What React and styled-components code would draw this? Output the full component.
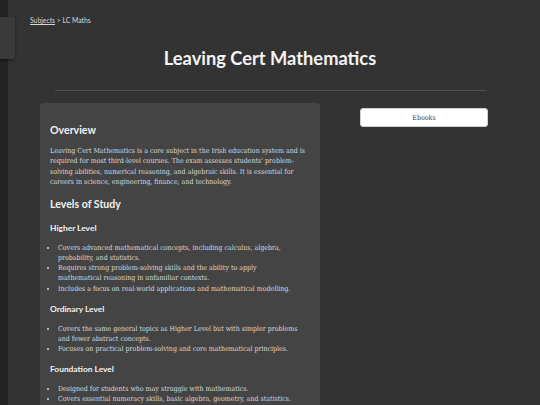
import React from 'react';
import styled, { createGlobalStyle } from 'styled-components';

const GlobalStyle = createGlobalStyle`
	html, body {
		margin: 0;
		padding: 0;
		background: #333333;
	}
	body {
		font-family: 'DejaVu Serif', serif;
		color: #e6e6e6;
		overflow: hidden;
	}
`;

const Page = styled.div`
	position: relative;
	width: 540px;
	height: 405px;
	background: #333333;
	overflow: hidden;
`;

const SideStrip = styled.div`
	position: absolute;
	left: 0;
	top: 0;
	width: 8px;
	height: 100%;
	background: #232323;
`;

const SideTab = styled.div`
	position: absolute;
	left: 0;
	top: 17px;
	width: 15px;
	height: 42px;
	background: #3a3a3a;
	border-radius: 0 2px 2px 0;
	box-shadow: 0 1px 3px rgba(0, 0, 0, 0.5);
`;

const Main = styled.main`
	padding: 16px 0 0 0;
`;

const Breadcrumb = styled.nav`
	margin-left: 30px;
	font-family: 'Lato', sans-serif;
	font-size: 6.8px;
	line-height: 8px;
	color: #d8d8d8;

	a {
		color: #d8d8d8;
		text-decoration: underline;
	}
`;

const Title = styled.h1`
	margin: 22px 0 0 0;
	text-align: center;
	font-family: 'Lato', sans-serif;
	font-weight: 700;
	font-size: 18.3px;
	line-height: 24px;
	color: #f4f4f4;
`;

const Divider = styled.hr`
	margin: 20px 0 0 55px;
	width: 431px;
	border: none;
	border-top: 1px solid #505050;
`;

const Content = styled.div`
	display: grid;
	grid-template-columns: 280px 128px;
	column-gap: 40px;
	margin: 12px 0 0 40px;
	align-items: start;
`;

const Card = styled.section`
	background: #444444;
	border-radius: 4px;
	padding: 20px 10px 20px 10px;
	min-height: 320px;
`;

const SectionHeading = styled.h2`
	margin: ${(p) => p.$top || 0}px 0 0 0;
	font-family: 'Lato', sans-serif;
	font-weight: 700;
	font-size: 10.6px;
	line-height: 14px;
	color: #f2f2f2;
`;

const LevelHeading = styled.h3`
	margin: ${(p) => p.$top}px 0 0 0;
	font-family: 'Lato', sans-serif;
	font-weight: 700;
	font-size: 8.4px;
	line-height: 12px;
	color: #f2f2f2;
`;

const Paragraph = styled.p`
	margin: 9px 0 0 0;
	font-size: 7px;
	font-stretch: condensed;
	line-height: 10.3px;
	color: #dadada;
`;

const List = styled.ul`
	margin: 9px 0 0 0;
	padding: 0 9px 0 8px;
	font-size: 7px;
	font-stretch: condensed;
	line-height: 10.1px;
	color: #dadada;

	li::marker {
		font-size: 6px;
	}
`;

const Aside = styled.aside`
	padding-top: 5px;
`;

const LinkButton = styled.button`
	display: block;
	width: 128px;
	height: 19px;
	background: #ffffff;
	border: 1px solid #cfcfcf;
	border-radius: 3px;
	font-family: 'DejaVu Serif', serif;
	font-stretch: condensed;
	font-size: 7px;
	color: #444444;
	cursor: pointer;
`;

const levels = [
	{
		name: 'Higher Level',
		points: [
			'Covers advanced mathematical concepts, including calculus, algebra, probability, and statistics.',
			'Requires strong problem-solving skills and the ability to apply mathematical reasoning in unfamiliar contexts.',
			'Includes a focus on real-world applications and mathematical modelling.',
		],
	},
	{
		name: 'Ordinary Level',
		points: [
			'Covers the same general topics as Higher Level but with simpler problems and fewer abstract concepts.',
			'Focuses on practical problem-solving and core mathematical principles.',
		],
	},
	{
		name: 'Foundation Level',
		points: [
			'Designed for students who may struggle with mathematics.',
			'Covers essential numeracy skills, basic algebra, geometry, and statistics.',
		],
	},
];

function App() {
	return (
		<Page>
			<GlobalStyle />
			<SideStrip />
			<SideTab />
			<Main>
				<Breadcrumb>
					<a href='#subjects'>Subjects</a> &gt; LC Maths
				</Breadcrumb>
				<Title>Leaving Cert Mathematics</Title>
				<Divider />
				<Content>
					<Card>
						<SectionHeading>Overview</SectionHeading>
						<Paragraph>
							Leaving Cert Mathematics is a core subject in the Irish
							education system and is required for most third-level
							courses. The exam assesses students' problem-solving
							abilities, numerical reasoning, and algebraic skills. It is
							essential for careers in science, engineering, finance, and
							technology.
						</Paragraph>
						<SectionHeading $top={10}>Levels of Study</SectionHeading>
						{levels.map((level, i) => (
							<div key={level.name}>
								<LevelHeading $top={i === 0 ? 11 : 9}>
									{level.name}
								</LevelHeading>
								<List>
									{level.points.map((point) => (
										<li key={point}>{point}</li>
									))}
								</List>
							</div>
						))}
					</Card>
					<Aside>
						<LinkButton>Ebooks</LinkButton>
					</Aside>
				</Content>
			</Main>
		</Page>
	);
}

export default App;
